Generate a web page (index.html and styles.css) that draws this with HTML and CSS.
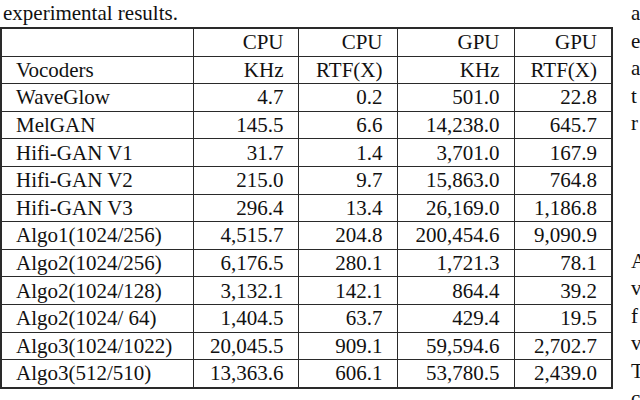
FILE: index.html
```
<!DOCTYPE html>
<html lang="en">
<head>
    <meta charset="UTF-8">
    <meta name="viewport" content="width=device-width, initial-scale=1.0">
    <title>Vocoder speed</title>
    <link rel="stylesheet" href="styles.css">
</head>
<body>
    <div class="page">
        <div class="left-col">
            <p class="caption">experimental results.</p>

            <table class="results">
                <colgroup>
                    <col class="col-name">
                    <col class="col-cpu-khz">
                    <col class="col-cpu-rtf">
                    <col class="col-gpu-khz">
                    <col class="col-gpu-rtf">
                </colgroup>
                <tr>
                    <td></td>
                    <td class="num">CPU</td>
                    <td class="num">CPU</td>
                    <td class="num">GPU</td>
                    <td class="num">GPU</td>
                </tr>
                <tr>
                    <td>Vocoders</td>
                    <td class="num">KHz</td>
                    <td class="num">RTF(X)</td>
                    <td class="num">KHz</td>
                    <td class="num">RTF(X)</td>
                </tr>
                <tr><td>WaveGlow</td><td class="num">4.7</td><td class="num">0.2</td><td class="num">501.0</td><td class="num">22.8</td></tr>
                <tr><td>MelGAN</td><td class="num">145.5</td><td class="num">6.6</td><td class="num">14,238.0</td><td class="num">645.7</td></tr>
                <tr><td>Hifi-GAN V1</td><td class="num">31.7</td><td class="num">1.4</td><td class="num">3,701.0</td><td class="num">167.9</td></tr>
                <tr><td>Hifi-GAN V2</td><td class="num">215.0</td><td class="num">9.7</td><td class="num">15,863.0</td><td class="num">764.8</td></tr>
                <tr><td>Hifi-GAN V3</td><td class="num">296.4</td><td class="num">13.4</td><td class="num">26,169.0</td><td class="num">1,186.8</td></tr>
                <tr><td>Algo1(1024/256)</td><td class="num">4,515.7</td><td class="num">204.8</td><td class="num">200,454.6</td><td class="num">9,090.9</td></tr>
                <tr><td>Algo2(1024/256)</td><td class="num">6,176.5</td><td class="num">280.1</td><td class="num">1,721.3</td><td class="num">78.1</td></tr>
                <tr><td>Algo2(1024/128)</td><td class="num">3,132.1</td><td class="num">142.1</td><td class="num">864.4</td><td class="num">39.2</td></tr>
                <tr><td>Algo2(1024/ 64)</td><td class="num">1,404.5</td><td class="num">63.7</td><td class="num">429.4</td><td class="num">19.5</td></tr>
                <tr><td>Algo3(1024/1022)</td><td class="num">20,045.5</td><td class="num">909.1</td><td class="num">59,594.6</td><td class="num">2,702.7</td></tr>
                <tr><td>Algo3(512/510)</td><td class="num">13,363.6</td><td class="num">606.1</td><td class="num">53,780.5</td><td class="num">2,439.0</td></tr>
            </table>
        </div>

        <!-- next column of the page, only its first letters show -->
        <div class="right-col">
            <div class="para">
                <div>a</div>
                <div>e</div>
                <div>a</div>
                <div>t</div>
                <div>r</div>
            </div>
            <div class="para para-gap">
                <div>A</div>
                <div>v</div>
                <div>f</div>
                <div>v</div>
                <div>T</div>
                <div>c</div>
            </div>
        </div>
    </div>
</body>
</html>
```

FILE: styles.css
```
html, body{
    margin: 0;
    overflow: hidden;
    background-color: white;
}
.page{
    display: flex;
    flex-direction: row;
    gap: 20px;
    font-family: "Liberation Serif", "Times New Roman", serif;
    font-size: 21px;
    color: #111;
}
.left-col{
    width: 611px;
    flex-shrink: 0;
}
.caption{
    margin: 0;
    padding-left: 3px;
    line-height: 27px;
}
.results{
    border-collapse: collapse;
    table-layout: fixed;
    width: 611px;
    border: 2px solid #2a2a2a;
}
.results td{
    border: 1px solid #2a2a2a;
    height: 26.6px;
    padding: 0 14px;
    line-height: 26px;
    white-space: nowrap;
}
.results .num{
    text-align: right;
}
.col-name{
    width: 192px;
}
.col-cpu-khz{
    width: 105px;
}
.col-cpu-rtf{
    width: 99px;
}
.col-gpu-khz{
    width: 117px;
}
.col-gpu-rtf{
    width: 98px;
}
.right-col{
    flex-shrink: 0;
    width: 9px;
    line-height: 27.5px;
}
.para-gap{
    margin-top: 110px;
}
```
